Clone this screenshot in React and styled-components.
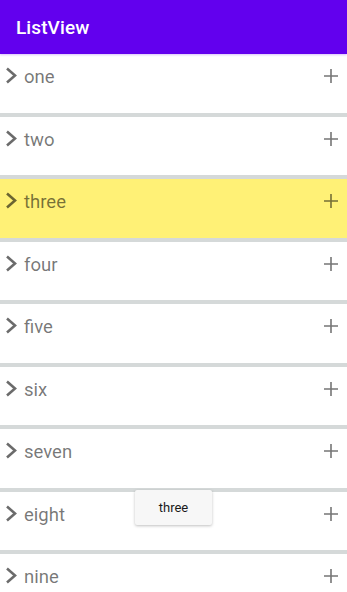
import { useState } from "react";
import styled, { createGlobalStyle } from "styled-components";

const GlobalStyle = createGlobalStyle`
    body {
        margin: 0;
        font-family: Roboto, "Noto Sans", sans-serif;
        background: #ffffff;
    }
`;

const Screen = styled.div`
    width: 347px;
    height: 592px;
    overflow: hidden;
    position: relative;
    display: flex;
    flex-direction: column;
    background: #ffffff;
`;

const AppBar = styled.div`
    height: 54px;
    flex-shrink: 0;
    background: #6200ee;
    color: #ffffff;
    display: flex;
    align-items: center;
    padding-left: 16px;
    font-size: 19px;
    font-weight: 500;
    letter-spacing: 0.1px;
    box-shadow: 0 1px 2px rgba(98, 0, 238, 0.25);
    position: relative;
    z-index: 1;
`;

const List = styled.div`
    display: flex;
    flex-direction: column;
`;

const Row = styled.div`
    height: 62.5px;
    flex-shrink: 0;
    display: flex;
    align-items: flex-start;
    padding-top: 9px;
    box-sizing: border-box;
    background: ${(props) => (props.selected ? "#fff176" : "#ffffff")};
    border-bottom: 4px solid #d5d9d9;
    cursor: pointer;
`;

const Chevron = styled.svg`
    width: 12px;
    height: 17px;
    margin: 4px 7px 0 5px;
    flex-shrink: 0;
`;

const Label = styled.span`
    flex: 1;
    font-size: 18.5px;
    line-height: 28px;
    color: rgba(0, 0, 0, 0.54);
`;

const AddButton = styled.svg`
    width: 14px;
    height: 14px;
    margin: 6px 9px 0 0;
    flex-shrink: 0;
`;

const Toast = styled.div`
    position: absolute;
    left: 135px;
    top: 490px;
    width: 77px;
    height: 35px;
    box-sizing: border-box;
    background: #f7f7f7;
    border-radius: 2px;
    box-shadow: 0 1px 3px rgba(0, 0, 0, 0.25);
    display: flex;
    align-items: center;
    justify-content: center;
    font-size: 13px;
    color: #1a1a1a;
`;

const items = ["one", "two", "three", "four", "five", "six", "seven", "eight", "nine"];

function App() {
    const [selected, setSelected] = useState("three");

    return (
        <Screen>
            <GlobalStyle />
            <AppBar>ListView</AppBar>
            <List>
                {items.map((item) => (
                    <Row key={item} selected={selected === item} onClick={() => setSelected(item)}>
                        <Chevron viewBox="0 0 12 17">
                            <path d="M2 1.5 L10 8.5 L2 15.5" fill="none" stroke="rgba(0,0,0,0.58)" strokeWidth="2.6" />
                        </Chevron>
                        <Label>{item}</Label>
                        <AddButton viewBox="0 0 14 14">
                            <path d="M7 0 V14 M0 7 H14" fill="none" stroke="rgba(0,0,0,0.54)" strokeWidth="1.6" />
                        </AddButton>
                    </Row>
                ))}
            </List>
            <Toast>{selected}</Toast>
        </Screen>
    );
}

export default App;
